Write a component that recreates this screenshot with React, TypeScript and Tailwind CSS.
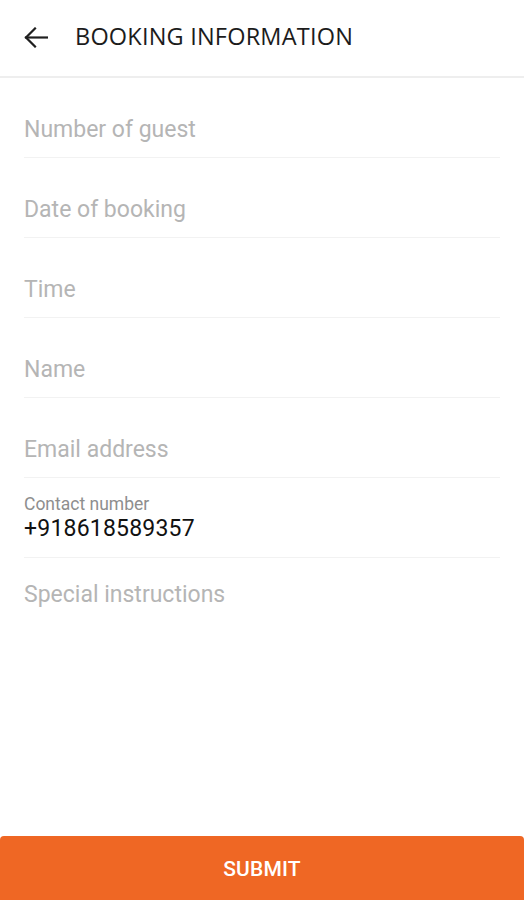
import React from 'react';

const fields = ['Number of guest', 'Date of booking', 'Time', 'Name', 'Email address'];

export default function App() {
    return (
        <div className="h-[900px] w-full bg-white flex flex-col" style={{ fontFamily: 'Roboto, "Noto Sans", sans-serif' }}>
            {/* Header */}
            <div className="h-[78px] flex items-center border-b-2 border-[#eeeeee] shrink-0 pb-[2px]">
                <div className="w-[75px] pl-[24px] flex items-center">
                    <svg width="24" height="21" viewBox="0 0 24 21" fill="none" stroke="#1f1f1f" strokeWidth="2.2" strokeLinecap="square">
                        <path d="M2 10.5H23" />
                        <path d="M11 1.5L2 10.5L11 19.5" />
                    </svg>
                </div>
                <h1 className="text-[23.5px] text-[#1c1c1c] tracking-[0.2px] leading-none" style={{ fontFamily: '"Open Sans", sans-serif' }}>
                    BOOKING INFORMATION
                </h1>
            </div>

            {/* Form */}
            <div className="px-[24px] flex flex-col">
                {fields.map((f) => (
                    <div key={f} className="pt-[40px] pb-[15px] border-b border-[#f2f2f2]">
                        <span className="block text-[23px] leading-[24px] text-[#b5b5b5]">{f}</span>
                    </div>
                ))}
                <div className="pt-[17px] pb-[16px] border-b border-[#f2f2f2]">
                    <span className="block text-[17.5px] leading-[18px] text-[#8e8e8e]">Contact number</span>
                    <span className="block text-[23px] leading-[24px] mt-[4px] text-[#111111] tracking-[0.2px]">+918618589357</span>
                </div>
                <div className="pt-[25px]">
                    <span className="block text-[23px] leading-[24px] text-[#b5b5b5]">Special instructions</span>
                </div>
            </div>

            {/* Submit */}
            <button className="mt-auto h-[64px] w-full bg-[#ef6724] rounded-t-[4px] text-white text-[21px] font-medium tracking-[0.2px] flex items-center justify-center pt-[3px]">
                SUBMIT
            </button>
        </div>
    );
}
